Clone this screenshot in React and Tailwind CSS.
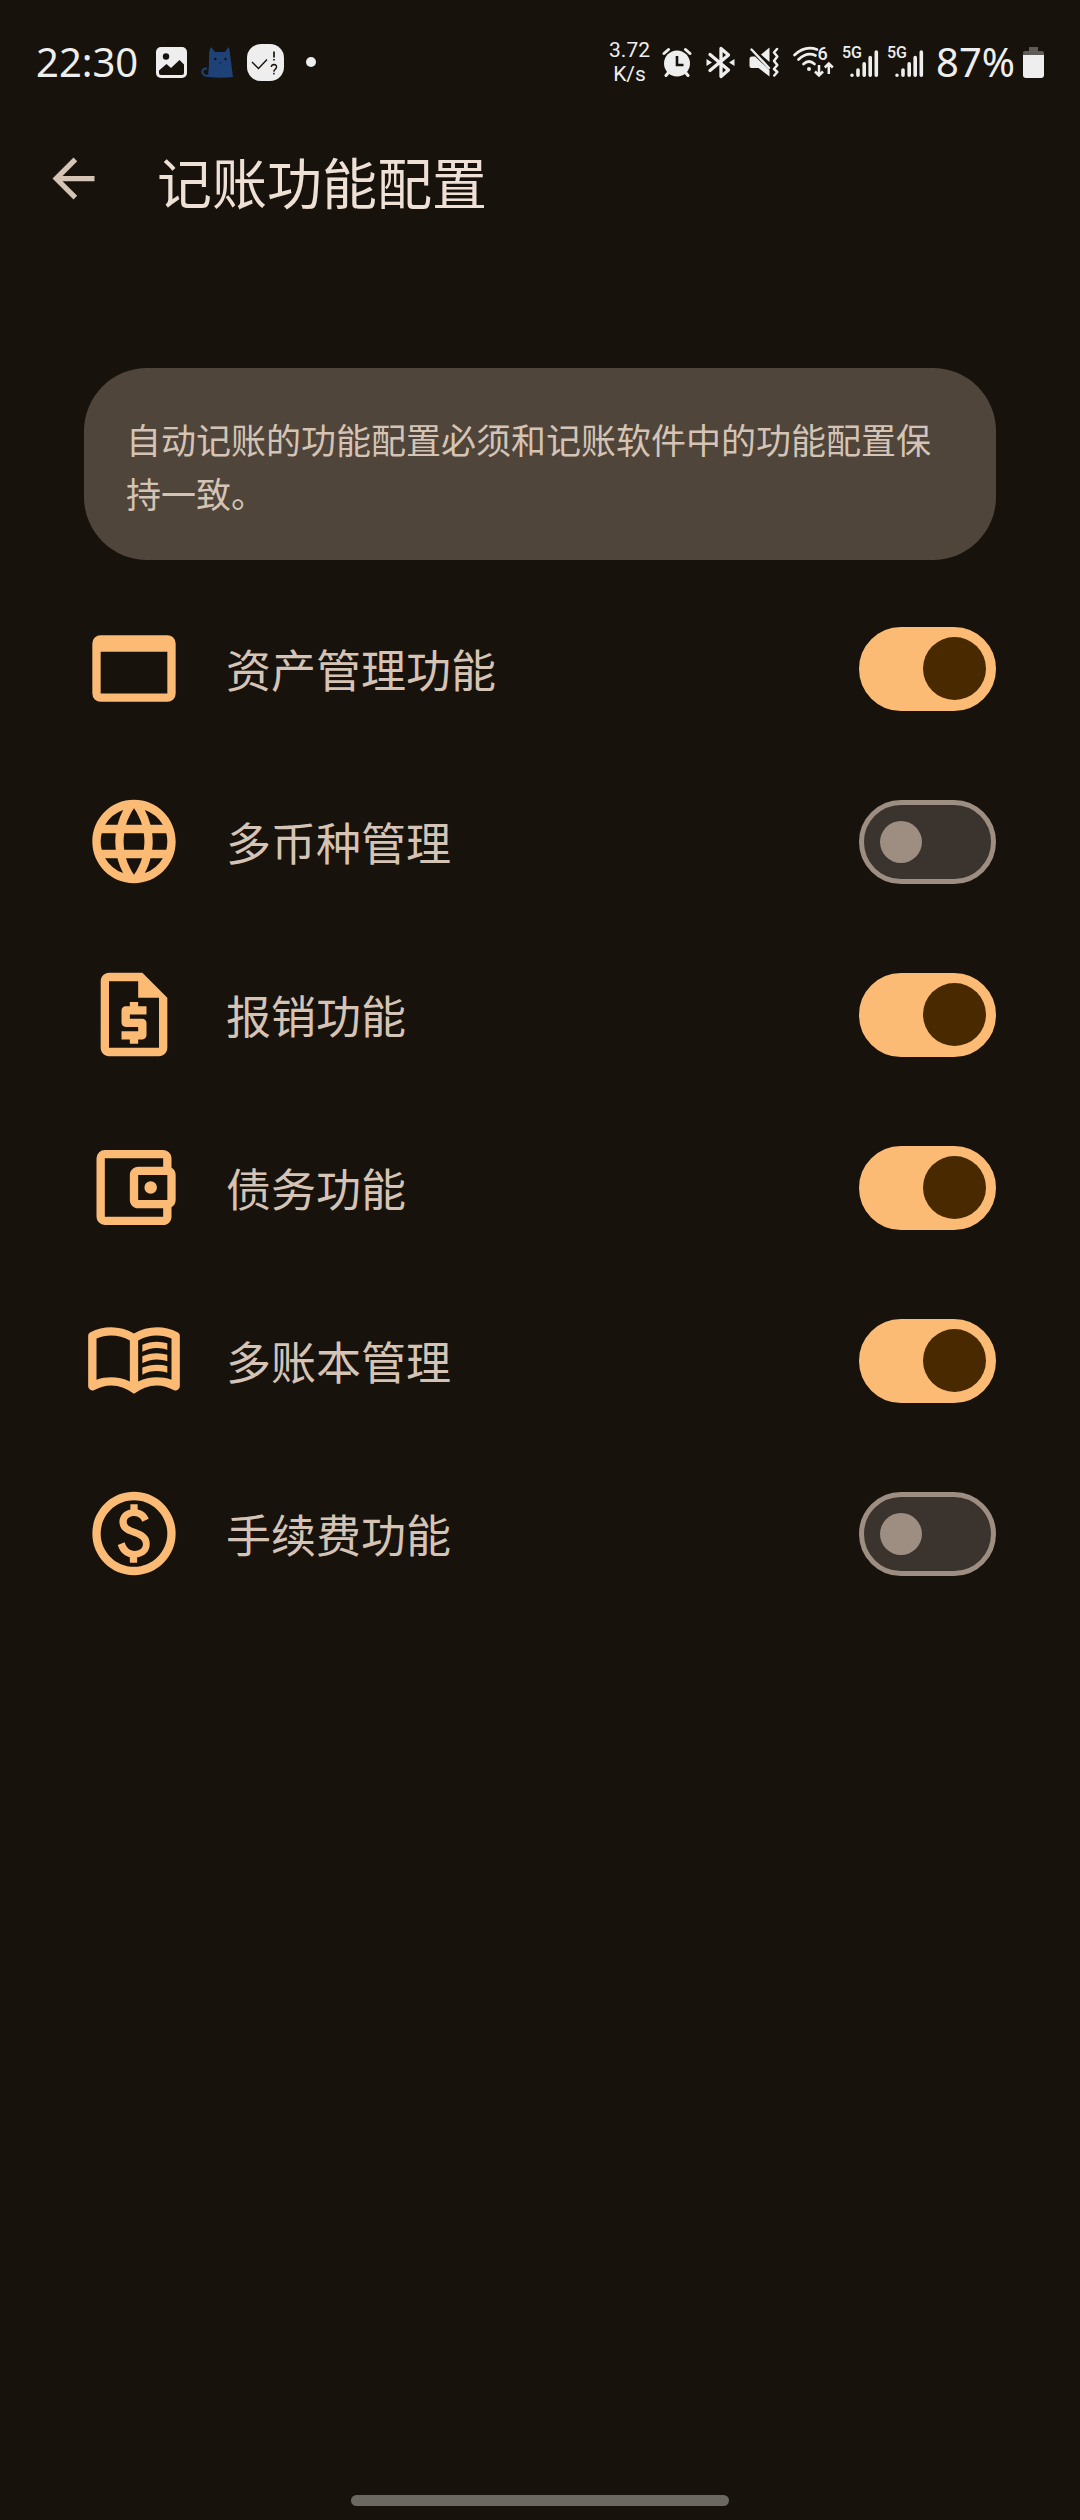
import React, { useState } from "react";

const ICONS = {
  asset: {
    box: "0 0 24 24",
    d: "M4 4h16a2 2 0 0 1 2 2v12a2 2 0 0 1-2 2H4a2 2 0 0 1-2-2V6a2 2 0 0 1 2-2zm0 4v10h16V8H4z",
  },
  globe: {
    box: "0 0 24 24",
    d: "M11.99 2C6.47 2 2 6.48 2 12s4.47 10 9.99 10C17.52 22 22 17.52 22 12S17.52 2 11.99 2zm6.93 6h-2.95a15.65 15.65 0 0 0-1.38-3.56A8.03 8.03 0 0 1 18.92 8zM12 4.04c.83 1.2 1.48 2.53 1.91 3.96h-3.82c.43-1.43 1.08-2.76 1.91-3.96zM4.26 14C4.1 13.36 4 12.69 4 12s.1-1.36.26-2h3.38c-.08.66-.14 1.32-.14 2s.06 1.34.14 2H4.26zm.82 2h2.95c.32 1.25.78 2.45 1.38 3.56A7.987 7.987 0 0 1 5.08 16zm2.95-8H5.08a7.987 7.987 0 0 1 4.33-3.56A15.65 15.65 0 0 0 8.03 8zM12 19.96c-.83-1.2-1.48-2.53-1.91-3.96h3.82c-.43 1.43-1.08 2.76-1.91 3.96zM14.34 14H9.66c-.09-.66-.16-1.32-.16-2s.07-1.35.16-2h4.68c.09.65.16 1.32.16 2s-.07 1.34-.16 2zm.25 5.56c.6-1.11 1.06-2.31 1.38-3.56h2.95a8.03 8.03 0 0 1-4.33 3.56zM16.36 14c.08-.66.14-1.32.14-2s-.06-1.34-.14-2h3.38c.16.64.26 1.31.26 2s-.1 1.36-.26 2h-3.38z",
  },
  quote: {
    box: "0 0 24 24",
    d: "M14 2H6c-1.1 0-1.99.9-1.99 2L4 20c0 1.1.89 2 1.99 2H18c1.1 0 2-.9 2-2V8l-6-6zM6 20V4h7v4h5v12H6zm5-1h2v-1h1c.55 0 1-.45 1-1v-3c0-.55-.45-1-1-1h-3v-1h4v-2h-2V9h-2v1h-1c-.55 0-1 .45-1 1v3c0 .55.45 1 1 1h3v1H9v2h2v1z",
  },
  wallet: {
    box: "0 0 24 24",
    d: "M21 7.28V5c0-1.1-.9-2-2-2H5a2 2 0 0 0-2 2v14a2 2 0 0 0 2 2h14c1.1 0 2-.9 2-2v-2.28A2 2 0 0 0 22 15V9a2 2 0 0 0-1-1.72zM20 9v6h-7V9h7zM5 19V5h14v2h-6c-1.1 0-2 .9-2 2v6c0 1.1.9 2 2 2h6v2H5zM14.5 12a1.5 1.5 0 1 0 3 0a1.5 1.5 0 1 0-3 0z",
  },
  book: {
    box: "0 -960 960 960",
    d: "M560-564v-68q33-14 67.5-21t72.5-7q26 0 51 4t49 10v64q-24-9-48.5-13.5T700-600q-38 0-73 9.5T560-564Zm0 220v-68q33-14 67.5-21t72.5-7q26 0 51 4t49 10v64q-24-9-48.5-13.5T700-380q-38 0-73 9t-67 27Zm0-110v-68q33-14 67.5-21t72.5-7q26 0 51 4t49 10v64q-24-9-48.5-13.5T700-490q-38 0-73 9.5T560-454ZM260-320q47 0 91.5 10.5T440-278v-394q-41-24-87-36t-93-12q-36 0-71.5 7T120-692v396q35-12 69.5-18t70.5-6Zm260 42q44-21 88.5-31.5T700-320q36 0 70.5 6t69.5 18v-396q-33-14-68.5-21t-71.5-7q-47 0-93 12t-87 36v394Zm-40 118q-48-38-104-59t-116-21q-42 0-82.5 11T100-198q-21 11-40.5-1T40-234v-482q0-11 5.5-21T62-752q46-24 96-36t102-12q58 0 113.5 15T480-740q51-30 106.5-45T700-800q52 0 102 12t96 36q11 5 16.5 15t5.5 21v482q0 23-19.5 35t-40.5 1q-37-20-77.5-31T700-240q-60 0-116 21t-104 59Z",
  },
  paid: {
    box: "0 0 24 24",
    d: "M12 2C6.48 2 2 6.48 2 12s4.48 10 10 10 10-4.48 10-10S17.52 2 12 2zm0 18c-4.41 0-8-3.59-8-8s3.59-8 8-8 8 3.59 8 8-3.59 8-8 8zm.89-8.9c-1.78-.59-2.64-.96-2.64-1.9 0-1.02 1.11-1.39 1.81-1.39 1.31 0 1.79.99 1.9 1.34l1.58-.67c-.15-.44-.82-1.91-2.66-2.23V5h-1.75v1.26c-2.6.56-2.62 2.85-2.62 2.96 0 2.27 2.25 2.91 3.35 3.31 1.58.56 2.28 1.07 2.28 2.03 0 1.13-1.05 1.61-1.98 1.61-1.82 0-2.34-1.87-2.4-2.09l-1.66.67c.63 2.19 2.28 2.78 2.9 2.96V19h1.75v-1.24c.52-.09 3.02-.59 3.02-3.22.01-1.39-.6-2.61-3-3.44z",
  },
};

const FEATURES = [
  { id: "asset", label: "资产管理功能", on: true },
  { id: "globe", label: "多币种管理", on: false },
  { id: "quote", label: "报销功能", on: true },
  { id: "wallet", label: "债务功能", on: true },
  { id: "book", label: "多账本管理", on: true },
  { id: "paid", label: "手续费功能", on: false },
];

function PictureIcon() {
  return (
    <svg className="h-[31px] w-[31px]" viewBox="0 0 31 31" aria-hidden="true">
      <rect width="31" height="31" rx="5" fill="#eeeeee" />
      <circle cx="10" cy="9.5" r="3.2" fill="#17120c" />
      <path d="M3 23.5l7.5-6.5 4.5 4 8.5-8 4.5 4.5V26q0 2-2 2H5q-2 0-2-2z" fill="#17120c" />
    </svg>
  );
}

function CatIcon() {
  return (
    <svg className="h-[31px] w-8" viewBox="0 0 32 31" aria-hidden="true">
      <path d="M10 0l4 5h10l3.5-5c1 2 1.5 4 1.5 7l3 23q-12 1.500-25 0l1-13V9q0-6 2-9z" fill="#1e4278" />
      <path d="M6 21.500q-4.500-.5-4.700 3.500.2 4 7.200 4" fill="none" stroke="#1e4278" strokeWidth="2" />
      <circle cx="14.300" cy="12" r="1.200" fill="#17120c" />
      <circle cx="24.500" cy="12" r="1.200" fill="#17120c" />
      <path d="M18 15.500l1.300.8 1.300-.8" fill="none" stroke="#17120c" strokeWidth=".7" />
    </svg>
  );
}

function TaskIcon() {
  return (
    <svg className="h-[37px] w-[37px]" viewBox="0 0 37 37" aria-hidden="true">
      <rect width="37" height="37" rx="14" fill="#eeeeee" />
      <g fill="none" stroke="#17120c" strokeWidth="1.400">
        <path d="M5 18l6.500 6.500L20 15.500" />
        <path d="M27 7.500v6M27 15v1.600" strokeWidth="1.700" />
        <path d="M24.300 23q.3-2.500 2.700-2.500 2.700.2 2.500 2.600-.1 1.300-1.400 2.300-1.200.8-1.200 2.300M26.900 28.800v1.700" />
      </g>
    </svg>
  );
}

function AlarmIcon() {
  return (
    <svg className="h-[31px] w-[30px]" viewBox="0 0 30 31" aria-hidden="true">
      <g fill="none" stroke="#eeeeee" strokeLinecap="round" strokeWidth="3">
        <path d="M2 6.500L6.500 2.500M28 6.500L23.500 2.500M6.500 25.500L4 28.500M23.500 25.500l2.500 3" />
      </g>
      <circle cx="15" cy="16.500" r="13" fill="#eeeeee" />
      <path d="M15 9v9h6.500" fill="none" stroke="#17120c" strokeWidth="2.600" />
    </svg>
  );
}

function BluetoothIcon() {
  return (
    <svg className="h-[33px] w-[29px]" viewBox="0 0 29 33" aria-hidden="true">
      <path
        d="M4 8.500l18.500 15.500-7.500 6.500V2.500L22.500 9 4 24.500"
        fill="none"
        stroke="#eeeeee"
        strokeLinecap="round"
        strokeLinejoin="round"
        strokeWidth="3.300"
      />
      <path d="M.5 13l5.500 3.500-5.500 3.500zM28.500 13L23 16.500l5.500 3.500z" fill="#eeeeee" />
    </svg>
  );
}

function MuteIcon() {
  return (
    <svg className="h-[30px] w-[30px]" viewBox="0 0 30 30" aria-hidden="true">
      <path d="M12 7.500L20.500.5V15z" fill="#eeeeee" />
      <path d="M6 9.500l14.500 13.500v6.500L9.500 21H2.500Q.5 21 .5 19v-7q0-2.500 2.500-2.500z" fill="#eeeeee" />
      <path d="M2.500 2.500L20 21" stroke="#eeeeee" strokeLinecap="round" strokeWidth="2.400" />
      <path
        d="M28 2l-3 3.500 3.300 4-3.300 4.500 3.300 4-3.300 4 3.300 3-3 3.500"
        fill="none"
        stroke="#eeeeee"
        strokeLinecap="round"
        strokeLinejoin="round"
        strokeWidth="2.500"
      />
    </svg>
  );
}

function WifiIcon() {
  return (
    <svg className="h-8 w-[41px] overflow-visible" viewBox="0 0 41 32" aria-hidden="true">
      <g fill="none" stroke="#eeeeee" strokeLinecap="round" strokeWidth="2.700">
        <path d="M1.500 9Q12-1 24 3.500" />
        <path d="M5.500 13.500Q14 5.500 22.500 9.500" />
        <path d="M10.500 18q5.500-5 11 0" />
      </g>
      <circle cx="16" cy="23" r="2" fill="#eeeeee" />
      <text x="24.500" y="14" fill="#eeeeee" fontFamily="Roboto, sans-serif" fontSize="18" fontWeight="500">
        6
      </text>
      <g fill="none" stroke="#eeeeee" strokeWidth="2.500">
        <path d="M26 19v10.500M22 25.500l4 4 4-4M35.800 28V17.500M31.800 21.500l4-4 4 4" />
      </g>
    </svg>
  );
}

function SignalIcon() {
  return (
    <svg className="h-8 w-[37px] overflow-visible" viewBox="0 0 37 32" role="img" aria-label="5G">
      <text x="0" y="12" fill="#eeeeee" fontFamily="Roboto, sans-serif" fontSize="16" fontWeight="500">
        5G
      </text>
      <g stroke="#eeeeee" strokeLinecap="round" strokeWidth="3.600">
        <path d="M10 29.200v.1M16 24v5.300M22.200 17.800v11.500M28.200 11.500v17.800M34.300 6v23.300" />
      </g>
    </svg>
  );
}

function BatteryIcon() {
  return (
    <svg className="h-[31px] w-[21px]" viewBox="0 0 21 31" aria-hidden="true">
      <path d="M6 0h9v4h4q2 0 2 2v3H0V6q0-2 2-2h4z" fill="#5f5c57" />
      <path d="M0 8h21v20q0 3-3 3H3q-3 0-3-3z" fill="#eeeeee" />
    </svg>
  );
}

function StatusBar() {
  return (
    <div className="flex h-[124px] items-center justify-between pr-9 pl-9 text-[#eeeeee]">
      <div className="flex items-center">
        <time className="w-[120px] font-['Noto_Sans'] text-[40px] leading-10">22:30</time>
        <div className="flex items-center gap-3.5">
          <PictureIcon />
          <CatIcon />
          <TaskIcon />
          <span className="ml-2 h-2.5 w-2.5 rounded-full bg-[#eeeeee]" />
        </div>
      </div>
      <div className="flex items-center">
        <div className="mr-3 text-center font-[Roboto] text-[21px] leading-6">
          <div>3.72</div>
          <div>K/s</div>
        </div>
        <div className="flex items-center gap-3.5">
          <AlarmIcon />
          <BluetoothIcon />
          <MuteIcon />
          <WifiIcon />
        </div>
        <div className="ml-2 flex items-center gap-2">
          <SignalIcon />
          <SignalIcon />
        </div>
        <span className="mr-2 ml-3 font-['Noto_Sans'] text-[40px] leading-10">87%</span>
        <BatteryIcon />
      </div>
    </div>
  );
}

function FeatureRow({ feature, checked, onChange }) {
  const icon = ICONS[feature.id];
  return (
    <li>
      <label className="flex h-[173px] items-center">
        <svg className="mr-[42px] h-[101px] w-[100px] shrink-0 fill-[#fbbb74]" viewBox={icon.box} aria-hidden="true">
          <path d={icon.d} />
        </svg>
        <span className="flex-1 text-[45px] leading-[67px]">{feature.label}</span>
        <input
          type="checkbox"
          role="switch"
          checked={checked}
          onChange={onChange}
          className="flex h-[84px] w-[137px] shrink-0 appearance-none items-center rounded-full border-[5px] border-[#9d8e81] bg-[#3b332d] pl-4 before:h-[42px] before:w-[42px] before:rounded-full before:bg-[#9d8e81] checked:justify-end checked:border-[#fbbb74] checked:bg-[#fbbb74] checked:pr-[5px] checked:before:h-[63px] checked:before:w-[63px] checked:before:bg-[#482900]"
        />
      </label>
    </li>
  );
}

export default function App() {
  const [enabled, setEnabled] = useState(() => Object.fromEntries(FEATURES.map((f) => [f.id, f.on])));

  return (
    <div
      lang="zh-CN"
      className="flex min-h-screen flex-col bg-[#17120c] font-['Noto_Sans_CJK_SC',sans-serif] text-[#d5c4b5]"
    >
      <StatusBar />
      <header className="flex h-[109px] items-center gap-[52px] px-[42px]">
        <button type="button" aria-label="返回">
          <svg className="h-[63px] w-[63px] fill-[#d5c4b5]" viewBox="0 0 24 24" aria-hidden="true">
            <path d="M20 11H7.830l5.590-5.590L12 4l-8 8 8 8 1.410-1.410L7.830 13H20v-2z" />
          </svg>
        </button>
        <h1 className="pt-0.5 text-[55px] leading-[80px] text-[#efe0d5]">记账功能配置</h1>
      </header>
      <main className="px-[84px] pt-[135px]">
        <p className="rounded-[63px] bg-[#4f453a] px-[42px] pt-11 pb-10 text-[35px] leading-[54px]">
          自动记账的功能配置必须和记账软件中的功能配置保持一致。
        </p>
        <ul className="mt-[22px]">
          {FEATURES.map((feature) => (
            <FeatureRow
              key={feature.id}
              feature={feature}
              checked={enabled[feature.id]}
              onChange={() => setEnabled({ ...enabled, [feature.id]: !enabled[feature.id] })}
            />
          ))}
        </ul>
      </main>
      <div className="mx-auto mt-auto mb-3.5 h-[11px] w-[35%] rounded-full bg-[#6b6761]" />
    </div>
  );
}
